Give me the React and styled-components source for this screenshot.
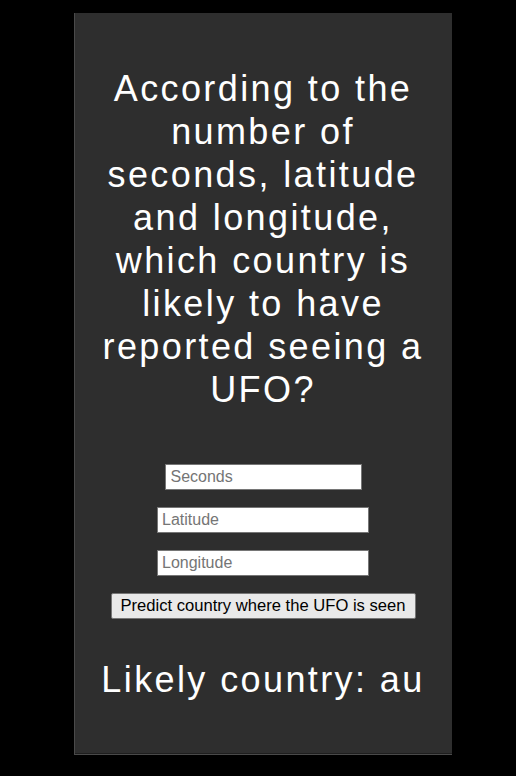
import { useState } from "react";
import styled, { createGlobalStyle } from "styled-components";

const GlobalStyle = createGlobalStyle`
  html, body {
    margin: 0;
    padding: 0;
    background: #000;
  }
  body {
    font-family: "Liberation Sans", Arial, sans-serif;
  }
`;

const Page = styled.div`
  padding: 13px 0 0 74px;
`;

const Panel = styled.main`
  width: 378px;
  box-sizing: border-box;
  background: #2e2e2e;
  border-left: 1px solid #4a4a4a;
  border-bottom: 1px solid #4a4a4a;
  box-shadow: inset 0 -1px 0 #1e1e1e;
  padding: 54px 25px 53px 24px;
  display: flex;
  flex-direction: column;
  align-items: center;
  color: #fff;
`;

const Title = styled.h1`
  margin: 0;
  font-size: 36px;
  font-weight: normal;
  line-height: 43px;
  letter-spacing: 2.4px;
  text-align: center;
`;

const Form = styled.form`
  margin-top: 53px;
  display: flex;
  flex-direction: column;
  align-items: center;
  gap: 17px;
`;

const Input = styled.input`
  width: ${(p) => p.$w}px;
  height: 26px;
  box-sizing: border-box;
  border: 1px solid #767676;
  border-radius: 0;
  padding: 0 4px 0 ${(p) => p.$pad}px;
  background: #fff;
  font-family: "Liberation Sans", Arial, sans-serif;
  font-size: 16px;
  color: #000;
  outline: none;
  &::placeholder {
    color: #757575;
  }
`;

const Button = styled.button`
  width: 305px;
  height: 26px;
  box-sizing: border-box;
  padding: 0;
  border: 1px solid #767676;
  border-radius: 2px;
  background: #e9e9e9;
  color: #000;
  font-family: "Liberation Sans", Arial, sans-serif;
  font-size: 16.6px;
  cursor: pointer;
`;

const Result = styled.p`
  margin: 39px 0 0;
  font-size: 36px;
  line-height: 43px;
  letter-spacing: 2.4px;
  text-align: center;
`;

const App = () => {
  const [country] = useState("au");

  return (
    <>
      <GlobalStyle />
      <Page>
        <Panel>
          <Title>
            According to the number of seconds, latitude and longitude, which
            country is likely to have reported seeing a UFO?
          </Title>
          <Form onSubmit={(e) => e.preventDefault()}>
            <Input type="number" placeholder="Seconds" $w={197} $pad={5} />
            <Input type="text" placeholder="Latitude" $w={212} $pad={4} />
            <Input type="text" placeholder="Longitude" $w={212} $pad={4} />
            <Button type="submit">Predict country where the UFO is seen</Button>
          </Form>
          <Result>Likely country: {country}</Result>
        </Panel>
      </Page>
    </>
  );
};

export default App;
